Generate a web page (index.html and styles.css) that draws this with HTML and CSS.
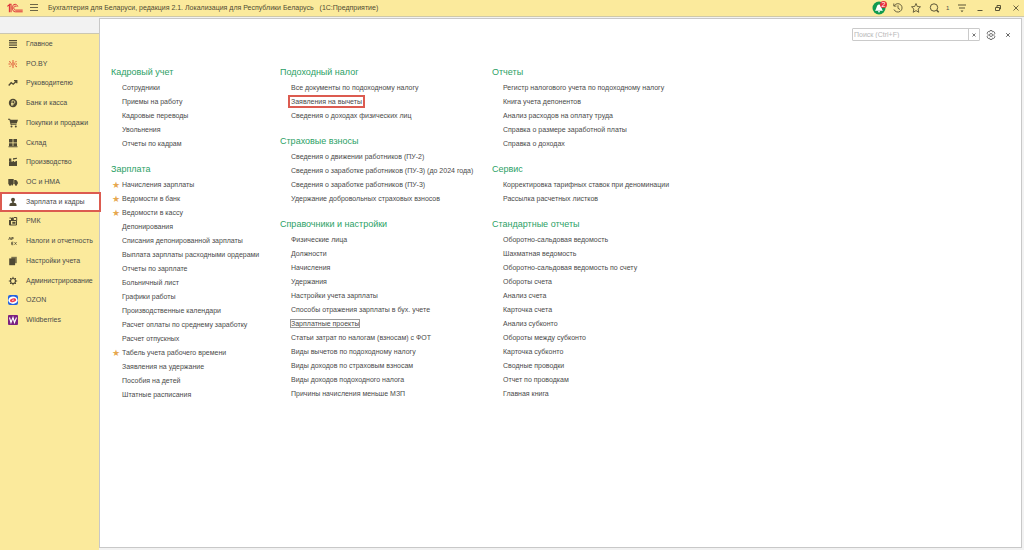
FILE: index.html
```html
<!DOCTYPE html>
<html lang="ru">
<head>
<meta charset="utf-8">
<title>Бухгалтерия для Беларуси</title>
<link rel="stylesheet" href="styles.css">
</head>
<body>
<header class="titlebar">
  <svg class="logo" viewBox="0 0 16 10" fill="none" stroke="#dd3038"><path d="M.3 3.400 2.400 1.700V9.300M2.200 1.300H4V9.300" stroke-width="1.100"/><path d="M10.800 3.600C10.300 2 9.200 1.300 8.100 1.300 6.300 1.300 5.200 2.900 5.200 4.900 5.200 7.100 6.500 8.800 8.400 8.800H15.700M9.400 4C9.100 3.300 8.700 3 8.100 3 7.200 3 6.800 3.900 6.800 4.900 6.800 6.200 7.500 7.100 8.500 7.100H15.700" stroke-width="1"/></svg>
  <button class="icon-btn menu-btn" aria-label="Меню"><svg viewBox="0 0 12 12" stroke="#6b6547" stroke-width="1"><path d="M2 2.500h8M2 5.500h8M2 8.500h8"/></svg></button>
  <h1 class="title">Бухгалтерия для Беларуси, редакция 2.1. Локализация для Республики Беларусь <span class="product">(1С:Предприятие)</span></h1>
  <div class="tools">
    <button class="icon-btn bell" aria-label="Уведомления"><svg viewBox="0 0 14 14"><circle cx="7" cy="7" r="6.500" fill="#109a50"/><path d="M2.800 9.800c2-1.200 1.400-6.300 4.200-6.300s2.200 5.100 4.200 6.300zM6 10.300h2v1H6z" fill="#fff"/></svg><span class="badge">2</span></button>
    <button class="icon-btn" aria-label="История"><svg viewBox="0 0 12 12" fill="none" stroke="#5b5537" stroke-width=".9"><path d="M2.200 3.800A4.200 4.200 0 1 1 2 7.500M1.800 1.500v2.600h2.600M6 3.300v3l2 1.200"/></svg></button>
    <button class="icon-btn" aria-label="Избранное"><svg viewBox="0 0 12 12" fill="none" stroke="#5b5537" stroke-width=".9"><path d="m6 1.500 1.300 3 3.200.3L8.100 7l.7 3.300L6 8.600l-2.800 1.700L3.900 7 1.500 4.800l3.200-.3z"/></svg></button>
    <button class="icon-btn" aria-label="Поиск"><svg viewBox="0 0 12 12" fill="none" stroke="#5b5537"><circle cx="6" cy="5.500" r="3.700"/><path d="m8.700 8.200 2 2" stroke-width="1.500"/></svg></button>
    <span class="count">1</span>
    <button class="icon-btn" aria-label="Настройка панели"><svg viewBox="0 0 12 12" fill="#5b5537"><path d="M2 2.500h8v1H2zM3 5.500h6v1H3zM4.500 8.500h3L6 10.300z"/></svg></button>
    <button class="icon-btn" aria-label="Свернуть"><svg viewBox="0 0 12 12" stroke="#5b5537"><path d="M3.500 8.500h5"/></svg></button>
    <button class="icon-btn" aria-label="Восстановить"><svg viewBox="0 0 12 12" fill="none" stroke="#5b5537"><path d="M3.500 5.500h4v3h-4zM5 5.500v-2h3.500v3.500H7.500"/></svg></button>
    <button class="icon-btn" aria-label="Закрыть"><svg viewBox="0 0 12 12" stroke="#5b5537" stroke-width=".9"><path d="m3.500 3.500 5 5m0-5-5 5"/></svg></button>
  </div>
</header>
<div class="workspace">
  <aside class="sidebar">
    <div class="tab-strip"></div>
    <nav class="sections">
      <a class="section" href="#"><svg viewBox="0 0 10 10" fill="#4f4934"><path d="M1 1h8v1.200H1zM1 3.300h8v1.200H1zM1 5.600h8v1.200H1zM1 7.900h8v1.200H1z"/></svg>Главное</a>
      <a class="section" href="#"><svg viewBox="0 0 10 10" fill="none" stroke="#df5a3a"><path d="M5 1v2M5 7v2M1 2.500l2 1M7 6.500l2 1.500M1.500 8 3 6.500M7 3.500l1.500-1.500M.5 5h2M7.500 5H9"/><circle cx="5" cy="5" r="1.300"/></svg>PO.BY</a>
      <a class="section" href="#"><svg viewBox="0 0 10 10" fill="none" stroke="#4f4934" stroke-width="1.300"><path d="M.7 7.500 3.200 4.700l2 1.500L8.500 3M6 2.700h2.800v2.600"/></svg>Руководителю</a>
      <a class="section" href="#"><svg viewBox="0 0 10 10"><circle cx="5" cy="5" r="4.200" fill="#4f4934"/><path d="M4 8V2.700h1.500a1.400 1.400 0 0 1 0 2.800H3M3 6.700h2.700" fill="none" stroke="#faeb9d" stroke-width=".8"/></svg>Банк и касса</a>
      <a class="section" href="#"><svg viewBox="0 0 10 10" fill="#4f4934"><path d="M0 .8h2l.5 1H10L8.700 5.500H3.300l.2.700h5v.9H2.700L1.400 1.700H0z"/><circle cx="3.500" cy="8.400" r="1"/><circle cx="7.800" cy="8.400" r="1"/></svg>Покупки и продажи</a>
      <a class="section" href="#"><svg viewBox="0 0 10 10" fill="#4f4934"><path d="M1 1h3.600v3.400H1zM5.400 1H9v3.400H5.400zM1 5.200h3.600v2.700H1zM5.400 5.200H9v2.700H5.400zM.5 8.300h9v.9h-9z"/></svg>Склад</a>
      <a class="section" href="#"><svg viewBox="0 0 10 10" fill="#4f4934"><path d="M1 9V5l2.500-1.500V5L6 3.700V5l3-1.300V9zM1 1.500h2.300v2L1 4.700zM5 1.200l4-.5v1L5 2.700z"/></svg>Производство</a>
      <a class="section" href="#"><svg viewBox="0 0 10 10" fill="#4f4934"><path d="M.3 2h5.400v5H.3zM6.200 3h2l1.600 2v2H6.200z"/><circle cx="2" cy="7.600" r="1.200"/><circle cx="4.200" cy="7.600" r="1"/><circle cx="8" cy="7.600" r="1.200"/></svg>ОС и НМА</a>
      <a class="section selected" href="#" aria-current="page"><svg viewBox="0 0 10 10" fill="#4f4934"><circle cx="5" cy="2.700" r="2"/><path d="M4.200 4h1.600v1.800C8 6 8.600 6.800 8.600 8.900H1.400C1.400 6.800 2 6 4.200 5.800z"/></svg>Зарплата и кадры</a>
      <a class="section" href="#"><svg viewBox="0 0 10 10"><path d="M1.500 4.500h7V9h-7zM1.500 2h2v2.500M6 1.500h2.700v3" fill="none" stroke="#4f4934"/><path d="M4 1.500h1.800V4H4zM1 4h2v5H1zM4.300 5.800h3.200v2H4.300z" fill="#4f4934"/></svg>РМК</a>
      <a class="section" href="#"><svg viewBox="0 0 10 10" fill="none" stroke="#4f4934" stroke-width=".8"><path d="M.7 4 1.800 1.200 3 4M3.700 4V1.500h1.500v1.200H3.800M3.700 8.700V6.200h1.600M3.700 7.400h1.400M3.700 8.700h1.600M6.500 6.200l2 2.500M8.500 6.200l-2 2.500"/></svg>Налоги и отчетность</a>
      <a class="section" href="#"><svg viewBox="0 0 10 10" fill="#4f4934"><path d="M3.300.8h5.500v6.400H3.300z" opacity=".75"/><path d="M1.200 2.400h5.900v6.800H1.200z"/></svg>Настройки учета</a>
      <a class="section" href="#"><svg viewBox="0 0 10 10" fill="none" stroke="#4f4934"><circle cx="5" cy="5" r="2.500" stroke-width="1.200"/><path d="M5 .8v1.500M5 7.700v1.500M.8 5h1.500M7.700 5h1.500M2 2l1 1M7 7l1 1M2 8l1-1M7 3l1-1"/></svg>Администрирование</a>
      <a class="section" href="#"><svg viewBox="0 0 10 10"><rect width="10" height="10" rx="2" fill="#2361df"/><ellipse cx="5" cy="5.200" rx="4.600" ry="3.700" fill="#fff"/><ellipse cx="5" cy="5.200" rx="2.600" ry="1.300" fill="#ee3c4f" stroke="#ee3c4f" stroke-width="1" transform="rotate(-15 5 5)"/><path d="m4 5.500 2-.6" stroke="#fff" stroke-width=".7"/></svg>OZON</a>
      <a class="section" href="#"><svg viewBox="0 0 10 10"><rect width="10" height="10" rx="1" fill="#7b2181"/><path d="m1.500 2.500 1.500 5 2-5 1.500 5 2-5" fill="none" stroke="#fff" stroke-width="1.100"/></svg>Wildberries</a>
    </nav>
  </aside>
  <main class="panel">
    <div class="panel-tools">
      <div class="search">
        <input class="search-input" type="text" placeholder="Поиск (Ctrl+F)" aria-label="Поиск">
        <button class="search-clear" aria-label="Очистить"><svg viewBox="0 0 10 10" stroke="#777"><path d="m3.500 3.500 3 3m0-3-3 3"/></svg></button>
      </div>
      <button class="icon-btn" aria-label="Настройки"><svg viewBox="0 0 12 12" fill="none" stroke="#666" stroke-width=".9"><path d="M5 1.500h2l.4 1.400 1.400-.4 1.200 1.700-1 1.100v1.400l1 1.100-1.200 1.700-1.400-.4L7 10.500H5l-.4-1.400-1.400.4L2 7.800l1-1.100V5.300L2 4.200l1.200-1.700 1.400.4z"/><circle cx="6" cy="6" r="1.500"/></svg></button>
      <button class="icon-btn" aria-label="Закрыть меню"><svg viewBox="0 0 12 12" stroke="#666"><path d="m4.200 4.200 3.600 3.600m0-3.600-3.600 3.600"/></svg></button>
    </div>
    <div class="columns">
      <div class="column">
        <section class="group">
          <h2 class="group-title">Кадровый учет</h2>
          <ul class="links">
            <li><a href="#">Сотрудники</a></li>
            <li><a href="#">Приемы на работу</a></li>
            <li><a href="#">Кадровые переводы</a></li>
            <li><a href="#">Увольнения</a></li>
            <li><a href="#">Отчеты по кадрам</a></li>
          </ul>
        </section>
        <section class="group">
          <h2 class="group-title">Зарплата</h2>
          <ul class="links">
            <li class="starred"><a href="#">Начисления зарплаты</a></li>
            <li class="starred"><a href="#">Ведомости в банк</a></li>
            <li class="starred"><a href="#">Ведомости в кассу</a></li>
            <li><a href="#">Депонирования</a></li>
            <li><a href="#">Списания депонированной зарплаты</a></li>
            <li><a href="#">Выплата зарплаты расходными ордерами</a></li>
            <li><a href="#">Отчеты по зарплате</a></li>
            <li><a href="#">Больничный лист</a></li>
            <li><a href="#">Графики работы</a></li>
            <li><a href="#">Производственные календари</a></li>
            <li><a href="#">Расчет оплаты по среднему заработку</a></li>
            <li><a href="#">Расчет отпускных</a></li>
            <li class="starred"><a href="#">Табель учета рабочего времени</a></li>
            <li><a href="#">Заявления на удержание</a></li>
            <li><a href="#">Пособия на детей</a></li>
            <li><a href="#">Штатные расписания</a></li>
          </ul>
        </section>
      </div>
      <div class="column">
        <section class="group">
          <h2 class="group-title">Подоходный налог</h2>
          <ul class="links">
            <li><a href="#">Все документы по подоходному налогу</a></li>
            <li><a class="marked" href="#">Заявления на вычеты</a></li>
            <li><a href="#">Сведения о доходах физических лиц</a></li>
          </ul>
        </section>
        <section class="group">
          <h2 class="group-title">Страховые взносы</h2>
          <ul class="links">
            <li><a href="#">Сведения о движении работников (ПУ-2)</a></li>
            <li><a href="#">Сведения о заработке работников (ПУ-3) (до 2024 года)</a></li>
            <li><a href="#">Сведения о заработке работников (ПУ-3)</a></li>
            <li><a href="#">Удержание добровольных страховых взносов</a></li>
          </ul>
        </section>
        <section class="group">
          <h2 class="group-title">Справочники и настройки</h2>
          <ul class="links">
            <li><a href="#">Физические лица</a></li>
            <li><a href="#">Должности</a></li>
            <li><a href="#">Начисления</a></li>
            <li><a href="#">Удержания</a></li>
            <li><a href="#">Настройки учета зарплаты</a></li>
            <li><a href="#">Способы отражения зарплаты в бух. учете</a></li>
            <li><a class="focused" href="#">Зарплатные проекты</a></li>
            <li><a href="#">Статьи затрат по налогам (взносам) с ФОТ</a></li>
            <li><a href="#">Виды вычетов по подоходному налогу</a></li>
            <li><a href="#">Виды доходов по страховым взносам</a></li>
            <li><a href="#">Виды доходов подоходного налога</a></li>
            <li><a href="#">Причины начисления меньше МЗП</a></li>
          </ul>
        </section>
      </div>
      <div class="column">
        <section class="group">
          <h2 class="group-title">Отчеты</h2>
          <ul class="links">
            <li><a href="#">Регистр налогового учета по подоходному налогу</a></li>
            <li><a href="#">Книга учета депонентов</a></li>
            <li><a href="#">Анализ расходов на оплату труда</a></li>
            <li><a href="#">Справка о размере заработной платы</a></li>
            <li><a href="#">Справка о доходах</a></li>
          </ul>
        </section>
        <section class="group">
          <h2 class="group-title">Сервис</h2>
          <ul class="links">
            <li><a href="#">Корректировка тарифных ставок при деноминации</a></li>
            <li><a href="#">Рассылка расчетных листков</a></li>
          </ul>
        </section>
        <section class="group">
          <h2 class="group-title">Стандартные отчеты</h2>
          <ul class="links">
            <li><a href="#">Оборотно-сальдовая ведомость</a></li>
            <li><a href="#">Шахматная ведомость</a></li>
            <li><a href="#">Оборотно-сальдовая ведомость по счету</a></li>
            <li><a href="#">Обороты счета</a></li>
            <li><a href="#">Анализ счета</a></li>
            <li><a href="#">Карточка счета</a></li>
            <li><a href="#">Анализ субконто</a></li>
            <li><a href="#">Обороты между субконто</a></li>
            <li><a href="#">Карточка субконто</a></li>
            <li><a href="#">Сводные проводки</a></li>
            <li><a href="#">Отчет по проводкам</a></li>
            <li><a href="#">Главная книга</a></li>
          </ul>
        </section>
      </div>
    </div>
  </main>
</div>
</body>
</html>
```
FILE: styles.css
```css
* {
  box-sizing: border-box;
}

body {
  margin: 0;
  min-height: 100vh;
  display: flex;
  flex-direction: column;
  background: #f2f2f2;
  color: #4a4a4a;
  font: 7px/14px "Liberation Sans", Arial, sans-serif;
}

a {
  color: inherit;
  text-decoration: none;
}

button {
  padding: 0;
  border: 0;
  background: none;
  font: inherit;
  color: inherit;
}

svg {
  display: block;
}

.titlebar {
  display: flex;
  align-items: center;
  height: 17px;
  padding: 0 2px 0 7px;
  background: #fbea9c;
  border-bottom: 1px solid #cfc9a8;
}

.logo {
  width: 16px;
  height: 10px;
}

.icon-btn {
  flex: none;
  width: 12px;
  height: 12px;
  position: relative;
}

.icon-btn svg {
  width: 100%;
  height: 100%;
}

.menu-btn {
  margin: 0 8px 0 5px;
}

.title {
  flex: 1;
  margin: 0;
  font-size: 7px;
  font-weight: normal;
  line-height: 16px;
  color: #4f4a33;
  white-space: nowrap;
}

.product {
  margin-left: 4px;
}

.tools {
  display: flex;
  align-items: center;
  gap: 6px;
}

.bell {
  width: 14px;
  height: 14px;
}

.badge {
  position: absolute;
  top: 0;
  right: -1px;
  width: 7px;
  height: 7px;
  border-radius: 50%;
  background: #e8303a;
  color: #fff;
  font-size: 7px;
  line-height: 7px;
  text-align: center;
}

.count {
  width: 4px;
  font-size: 6px;
}

.workspace {
  flex: 1;
  display: grid;
  grid-template-columns: 99px 1fr;
}

.sidebar {
  display: flex;
  flex-direction: column;
  background: #fbea9c;
}

.tab-strip {
  height: 17px;
  background: #f2f2f2;
  border-bottom: 1px solid #cbc7b2;
}

.sections {
  display: grid;
  grid-auto-rows: 1fr;
  min-height: 296px;
}

.section {
  display: flex;
  align-items: center;
  gap: 8px;
  padding-left: 8px;
  white-space: nowrap;
}

.section svg {
  flex: none;
  width: 10px;
  height: 10px;
}

.selected {
  z-index: 1;
  margin-right: -2px;
  padding-left: 6px;
  background: #fff;
  border: 2px solid #dc5b50;
}

.panel {
  margin: 1px 2px 2px 0;
  padding: 9px 7px 0 11px;
  background: #fff;
  border: 1px solid #c8c8c8;
}

.panel-tools {
  display: flex;
  justify-content: flex-end;
  align-items: center;
  gap: 5px;
  height: 13px;
}

.search {
  display: flex;
  width: 128px;
  height: 13px;
  border: 1px solid #cacaca;
  border-radius: 1px;
}

.search-input {
  flex: 1;
  min-width: 0;
  padding: 0 1px;
  border: 0;
  outline: 0;
  font: inherit;
  line-height: 11px;
}

.search-input::placeholder {
  color: #b8b8b8;
}

.search-clear {
  width: 11px;
  border-left: 1px solid #cacaca;
}

.columns {
  display: grid;
  grid-template-columns: 169px 212px 1fr;
  margin-top: 22px;
}

.column {
  display: flex;
  flex-direction: column;
  gap: 9px;
}

.group-title {
  margin: 0;
  font-size: 9px;
  font-weight: normal;
  line-height: 18px;
  color: #2c9f66;
}

.links {
  margin: 0;
  padding: 0 0 0 11px;
  list-style: none;
  white-space: nowrap;
}

.starred {
  position: relative;
}

.starred::before {
  content: "★";
  position: absolute;
  left: -10px;
  color: #e6a74f;
  font-family: "DejaVu Sans", sans-serif;
  font-size: 9px;
}

.marked {
  outline: 2px solid #dc5b50;
  outline-offset: 1px;
}

.focused {
  outline: 1px solid #999;
}
```
